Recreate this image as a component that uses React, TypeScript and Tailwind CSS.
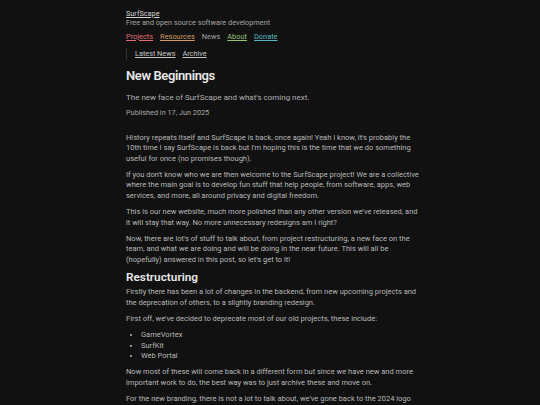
import React from "react";

const nav = [
  { label: "Projects", cls: "text-[#e06c75] underline" },
  { label: "Resources", cls: "text-[#d19a66] underline" },
  { label: "News", cls: "text-[#a3a3a3]" },
  { label: "About", cls: "text-[#98c379] underline" },
  { label: "Donate", cls: "text-[#56b6c2] underline" },
];

function P({ children }: { children: React.ReactNode }) {
  return <p className="mb-[5.4px] text-[7.5px] leading-[10.6px] text-[#b8b8b8]">{children}</p>;
}

export default function App() {
  return (
    <div className="min-h-screen bg-[#111111] font-['Roboto',sans-serif] antialiased">
      <div className="mx-auto w-[288px] pt-[8.5px]">
        <header>
          <a className="block text-[7.3px] leading-[9px] text-[#d4d4d4] underline">SurfScape</a>
          <p className="text-[7.3px] leading-[9px] text-[#a3a3a3]">Free and open source software development</p>
          <nav className="mt-[5.5px] flex gap-[7px] text-[7.4px] leading-[10px]">
            {nav.map((n) => (
              <a key={n.label} className={n.cls}>
                {n.label}
              </a>
            ))}
          </nav>
          <div className="mt-[6px] flex gap-[7px] border-l border-[#333] pl-[8px] text-[7.3px] leading-[12px] text-[#c4c4c4]">
            <a className="underline">Latest News</a>
            <a className="underline">Archive</a>
          </div>
        </header>

        <main className="mt-[7px]">
          <h1 className="text-[13px] font-semibold leading-[18px] tracking-[-0.03em] text-[#e8e8e8]">New Beginnings</h1>
          <p className="mt-[6.5px] text-[8px] leading-[11px] text-[#b0b0b0]">
            The new face of SurfScape and what's coming next.
          </p>
          <p className="mt-[5.5px] text-[7.3px] leading-[10px] text-[#a8a8a8]">Published in 17, Jun 2025</p>

          <div className="mt-[14.7px] w-[296px]">
            <P>
              History repeats itself and SurfScape is back, once again! Yeah I know, it's probably the 10th time I say
              SurfScape is back but I'm hoping this is the time that we do something useful for once (no promises
              though).
            </P>
            <P>
              If you don't know who we are then welcome to the SurfScape project! We are a collective where the main
              goal is to develop fun stuff that help people, from software, apps, web services, and more, all around
              privacy and digital freedom.
            </P>
            <P>
              This is our new website, much more polished than any other version we've released, and it will stay that
              way. No more unnecessary redesigns am I right?
            </P>
            <P>
              Now, there are lot's of stuff to talk about, from project restructuring, a new face on the team, and what
              we are doing and will be doing in the near future. This will all be (hopefully) answered in this post, so
              let's get to it!
            </P>
            <h2 className="mb-[4.7px] text-[11.8px] font-semibold leading-[12px] text-[#e8e8e8]">Restructuring</h2>
            <P>
              Firstly there has been a lot of changes in the backend, from new upcoming projects and the deprecation of
              others, to a slightly branding redesign.
            </P>
            <P>First off, we've decided to deprecate most of our old projects, these include:</P>
            <ul className="mb-[5.4px] list-disc pl-[15px] text-[7.5px] leading-[10.6px] text-[#b8b8b8]">
              <li>GameVortex</li>
              <li>SurfKit</li>
              <li>Web Portal</li>
            </ul>
            <P>
              Now most of these will come back in a different form but since we have new and more important work to do,
              the best way was to just archive these and move on.
            </P>
            <P>
              For the new branding, there is not a lot to talk about, we've gone back to the 2024 logo and colors, with
              some small tweaks here and there.
            </P>
          </div>
        </main>
      </div>
    </div>
  );
}
